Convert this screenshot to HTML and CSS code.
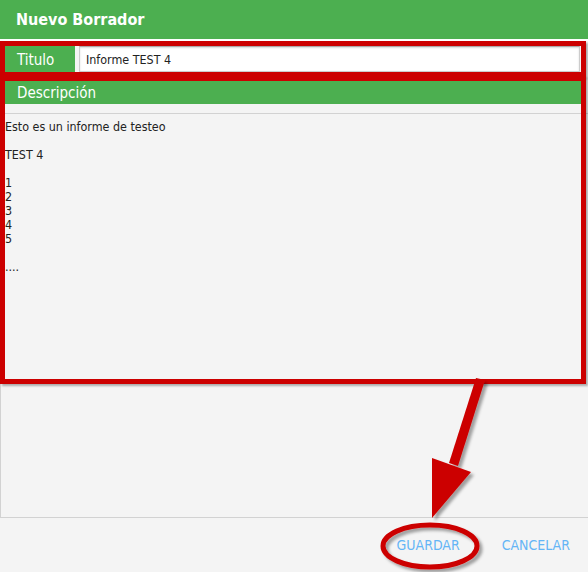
FILE: index.html
```html
<!DOCTYPE html>
<html lang="es">
<head>
  <meta charset="UTF-8">
  <title>Nuevo Borrador</title>
  <link rel="stylesheet" href="styles.css">
</head>
<body>
  <div class="dialog">
    <header class="dialog-header">Nuevo Borrador</header>

    <div class="dialog-body">
      <div class="field-row">
        <span class="field-label">Titulo</span>
        <div class="field-input">Informe TEST 4</div>
      </div>

      <div class="section-bar">Descripción</div>

      <div class="text-area">Esto es un informe de testeo

TEST 4

1
2
3
4
5

....</div>
    </div>

    <footer class="dialog-actions">
      <button class="action-btn">GUARDAR</button>
      <button class="action-btn">CANCELAR</button>
    </footer>
  </div>

  <!-- anotaciones -->
  <div class="mark mark-title"></div>
  <div class="mark mark-desc"></div>
  <svg class="overlay" width="588" height="572" viewBox="0 0 588 572">
    <defs>
      <filter id="shadow" x="-20%" y="-20%" width="140%" height="140%">
        <feDropShadow dx="3" dy="3" stdDeviation="1.5" flood-color="#000" flood-opacity="0.35"/>
      </filter>
    </defs>
    <g filter="url(#shadow)" fill="#cc0000">
      <polygon points="476,378 485,380 458,466 449,463"/>
      <polygon points="432,458 471,472 432,518"/>
      <ellipse cx="430" cy="546" rx="47" ry="21" fill="none" stroke="#cc0000" stroke-width="5"/>
    </g>
  </svg>
</body>
</html>
```

FILE: styles.css
```css
:root {
  --green: #4caf50;
  --bg: #f4f4f4;
  --line: #d2d2d2;
  --red: #cc0000;
  --blue: #64b5f6;
}

body {
  margin: 0;
  background: var(--bg);
  font-family: 'DejaVu Sans Condensed', 'DejaVu Sans', sans-serif;
  color: #222;
}

.dialog {
  width: 588px;
  height: 572px;
  display: flex;
  flex-direction: column;
}

.dialog-header {
  height: 39px;
  background: var(--green);
  color: #fff;
  font-weight: bold;
  font-size: 16px;
  line-height: 40px;
  padding-left: 16px;
  border-bottom: 2px solid #fff;
}

.dialog-body {
  padding: 5px 0 0 0;
}

.field-row {
  display: flex;
  gap: 4px;
  height: 26px;
  padding: 0 8px 0 5px;
}

.field-label {
  width: 70px;
  background: var(--green);
  color: #fff;
  font-size: 15px;
  line-height: 28px;
  padding-left: 12px;
  box-sizing: border-box;
}

.field-input {
  flex: 1;
  background: #fff;
  border: 1px solid #ccc;
  border-top-color: #aaa;
  box-shadow: inset 0 1px 2px rgba(0,0,0,0.15);
  font-size: 12.4px;
  line-height: 26px;
  padding-left: 6px;
}

.section-bar {
  margin: 9px 6px 0 5px;
  height: 23px;
  background: var(--green);
  color: #fff;
  font-size: 15px;
  line-height: 24px;
  padding-left: 12px;
}

.text-area {
  margin-top: 9px;
  height: 405px;
  border: 1px solid var(--line);
  border-right: none;
  white-space: pre;
  font-size: 12.4px;
  line-height: 14px;
  padding: 6px 0 0 4px;
  box-sizing: border-box;
}

.dialog-actions {
  display: flex;
  justify-content: flex-end;
  align-items: center;
  gap: 34px;
  height: 53px;
  padding-right: 14px;
}

.action-btn {
  background: none;
  border: none;
  color: var(--blue);
  font-family: inherit;
  font-size: 14px;
  padding: 6px 4px;
  cursor: pointer;
}

.mark {
  position: absolute;
  left: 0;
  width: 586px;
  border: 5px solid var(--red);
  box-sizing: border-box;
  box-shadow: 2px 2px 2px rgba(0,0,0,0.3);
}

.mark-title {
  top: 41px;
  height: 36px;
}

.mark-desc {
  top: 76px;
  height: 308px;
}

.overlay {
  position: absolute;
  left: 0;
  top: 0;
  pointer-events: none;
}
```
